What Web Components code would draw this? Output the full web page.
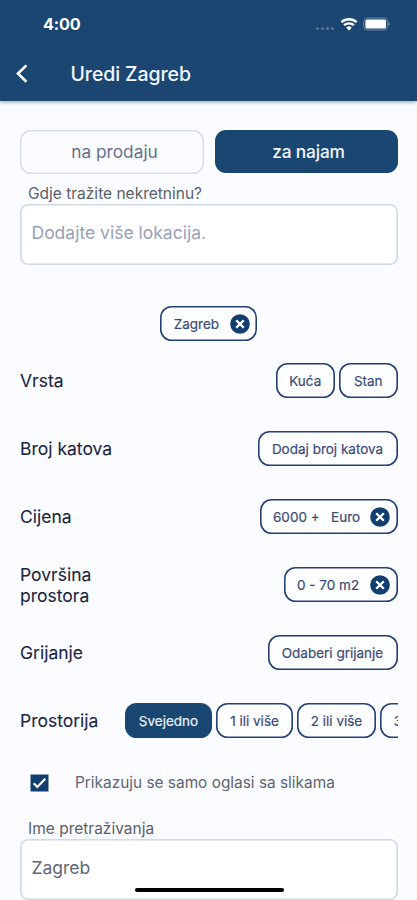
<!DOCTYPE html>
<html lang="hr">
<head>
<meta charset="utf-8">
<title>Uredi Zagreb</title>
<style>
html, body { margin: 0; height: 100%; overflow: hidden; }
body { background: #fafcff; font-family: Inter, "Liberation Sans", sans-serif; color: #1b2340; }
</style>
</head>
<body>
<search-editor></search-editor>
<script>
const define = (name, html) => {
  const template = document.createElement('template');
  template.innerHTML = html;
  customElements.define(name, class extends HTMLElement {
    constructor() {
      super();
      this.attachShadow({ mode: 'open' }).append(template.content.cloneNode(true));
    }
  });
};

define('status-bar', `
<style>
:host { display: flex; align-items: center; height: 48px; padding: 0 27px 0 43px; box-sizing: border-box; color: #fff; }
.time { font-size: 16.2px; font-weight: 700; letter-spacing: -.2px; flex: 1; }
svg { display: block; }
</style>
<span class="time">4:00</span>
<svg width="76" height="16" viewBox="0 0 76 16">
  <g fill="#55738f"><circle cx="3.5" cy="12.5" r="1.6"/><circle cx="8.5" cy="12.5" r="1.6"/><circle cx="13.5" cy="12.5" r="1.6"/><circle cx="18.5" cy="12.5" r="1.6"/></g>
  <g fill="none" stroke="#fff" stroke-width="2.4"><path d="M27.4 6.2a11.2 11.2 0 0 1 15.2 0"/><path d="M30.1 9.2a7.4 7.4 0 0 1 9.8 0"/></g>
  <path d="M32.2 11.5a4.3 4.3 0 0 1 5.6 0L35 14.8z" fill="#fff"/>
  <rect x="49.8" y="2.1" width="23.6" height="11.8" rx="3.2" fill="none" stroke="#6d88a4"/>
  <rect x="51.4" y="3.4" width="20.6" height="9.2" rx="1.6" fill="#fff"/>
  <path d="M74.6 6v4q1.2-.6 1.2-2t-1.2-2" fill="#8ba0b7"/>
</svg>`);

define('title-bar', `
<style>
:host { display: flex; align-items: center; height: 51px; padding-left: 15px; box-sizing: border-box; color: #f2f6ff; }
svg { display: block; width: 14px; margin-right: 41.5px; }
h1 { margin: 0; font-size: 19.5px; font-weight: 500; line-height: 24px; letter-spacing: -.1px; }
</style>
<svg height="20" viewBox="0 0 14 20"><path d="M11.4 1.4 3 9.6l8.4 8.2" fill="none" stroke="#fff" stroke-width="2.7"/></svg>
<h1><slot></slot></h1>`);

define('deal-option', `
<style>
:host { display: flex; align-items: center; justify-content: center; box-sizing: border-box; height: 44px; padding-left: 5px; box-shadow: inset 0 0 0 1.5px #d6dee6; border-radius: 11px; font-size: 17.3px; color: #68718a; }
:host([selected]) { height: 42.5px; box-shadow: none; background: #1a4672; color: #f2f6ff; font-weight: 500; letter-spacing: -.15px; }
</style><slot></slot>`);

define('text-field', `
<style>
:host { display: block; }
.label { display: block; padding-left: 8px; font-size: 15.5px; line-height: 20px; color: #5b6069; }
.box { display: flex; align-items: center; box-sizing: border-box; height: 60.5px; padding: 0 11px 4px 11.5px; box-shadow: inset 0 0 0 1.6px #d0dae5; border-radius: 8px; background: #fff; font-size: 17.5px; color: var(--field-color, #606775); }
</style>
<span class="label"><slot name="label"></slot></span>
<div class="box"><slot></slot></div>`);

define('close-icon', `
<style>:host { display: block; width: 20px; height: 20px; white-space: normal; } svg { display: block; }</style>
<svg width="20" height="20" viewBox="0 0 20 20"><circle cx="10" cy="10" r="9.8" fill="#123f70"/><path d="m6.2 6.2 7.6 7.6m0-7.6-7.6 7.6" stroke="#fff" stroke-width="2.3"/></svg>`);

define('filter-chip', `
<style>
:host { display: flex; align-items: center; justify-content: center; flex: none; box-sizing: border-box; width: var(--w); height: 35px; box-shadow: inset 0 0 0 1.6px #243f78; border-radius: 11.5px; background: #fdfeff; font-size: 13.5px; color: #3c4b73; white-space: pre; -webkit-text-stroke: .2px; padding-top: 1px; }
:host([selected]) { background: #1a4672; box-shadow: none; color: #eaf1fb; }
:host([removable]) { justify-content: space-between; padding: 0 7.5px 0 13.5px; }
</style><slot></slot><slot name="icon"></slot>`);

define('filter-row', `
<style>
:host { display: flex; align-items: center; height: 68px; }
.name { width: 105px; flex: none; font-size: 17.5px; line-height: 21px; color: #202541; -webkit-text-stroke: .1px; }
.chips { display: flex; gap: 4px; flex: 1; min-width: 0; overflow: hidden; justify-content: flex-end; }
:host([scroll]) .chips { justify-content: flex-start; }
</style>
<div class="name"><slot name="name"></slot></div><div class="chips"><slot></slot></div>`);

define('check-option', `
<style>
:host { display: flex; align-items: center; height: 20px; padding-left: 10px; font-size: 15.4px; color: #606570; }
svg { display: block; margin-right: 26px; }
</style>
<svg width="19" height="18" viewBox="0 0 19 18"><path fill="#123f70" d="M.5.5h18v17H.5z"/><path d="m3.7 9.2 3.6 3.7 8-8.2" fill="none" stroke="#fff" stroke-width="2.2"/></svg>
<span><slot></slot></span>`);

define('search-editor', `
<style>
:host { display: block; position: relative; height: 900px; overflow: hidden; }
header { background: #1b4672; height: 101px; box-shadow: 0 1px 4px rgba(20,40,60,.45); }
main { padding: 28.5px 19.5px 0 20px; }
.deal { display: grid; grid-template-columns: 184px 183px; justify-content: space-between; align-items: center; }
.where { margin-top: 10.5px; --field-color: #97a1b6; }
.places { display: flex; justify-content: center; margin: 41.5px 0 5.5px; }
.check { margin-top: 18px; }
.title { margin-top: 26.5px; }
.home { position: absolute; left: 134.5px; top: 887.5px; width: 149px; height: 4.5px; border-radius: 3px; background: #000; }
</style>
<header><status-bar></status-bar><title-bar>Uredi Zagreb</title-bar></header>
<main>
  <div class="deal"><deal-option>na prodaju</deal-option><deal-option selected>za najam</deal-option></div>
  <text-field class="where"><span slot="label">Gdje tražite nekretninu?</span>Dodajte više lokacija.</text-field>
  <div class="places"><filter-chip removable style="--w:97px">Zagreb<close-icon slot="icon"></close-icon></filter-chip></div>
  <filter-row><span slot="name">Vrsta</span><filter-chip style="--w:59.5px">Kuća</filter-chip><filter-chip style="--w:58.5px">Stan</filter-chip></filter-row>
  <filter-row><span slot="name">Broj katova</span><filter-chip style="--w:140px">Dodaj broj katova</filter-chip></filter-row>
  <filter-row><span slot="name">Cijena</span><filter-chip removable style="--w:138px">6000 +   Euro<close-icon slot="icon"></close-icon></filter-chip></filter-row>
  <filter-row><span slot="name">Površina prostora</span><filter-chip removable style="--w:114px">0 - 70 m2<close-icon slot="icon"></close-icon></filter-chip></filter-row>
  <filter-row><span slot="name">Grijanje</span><filter-chip style="--w:130px">Odaberi grijanje</filter-chip></filter-row>
  <filter-row scroll><span slot="name">Prostorija</span><filter-chip selected style="--w:87px">Svejedno</filter-chip><filter-chip style="--w:77px">1 ili više</filter-chip><filter-chip style="--w:79px">2 ili više</filter-chip><filter-chip style="--w:79px">3 ili više</filter-chip></filter-row>
  <check-option class="check">Prikazuju se samo oglasi sa slikama</check-option>
  <text-field class="title"><span slot="label">Ime pretraživanja</span>Zagreb</text-field>
</main>
<div class="home"></div>`);
</script>
</body>
</html>
